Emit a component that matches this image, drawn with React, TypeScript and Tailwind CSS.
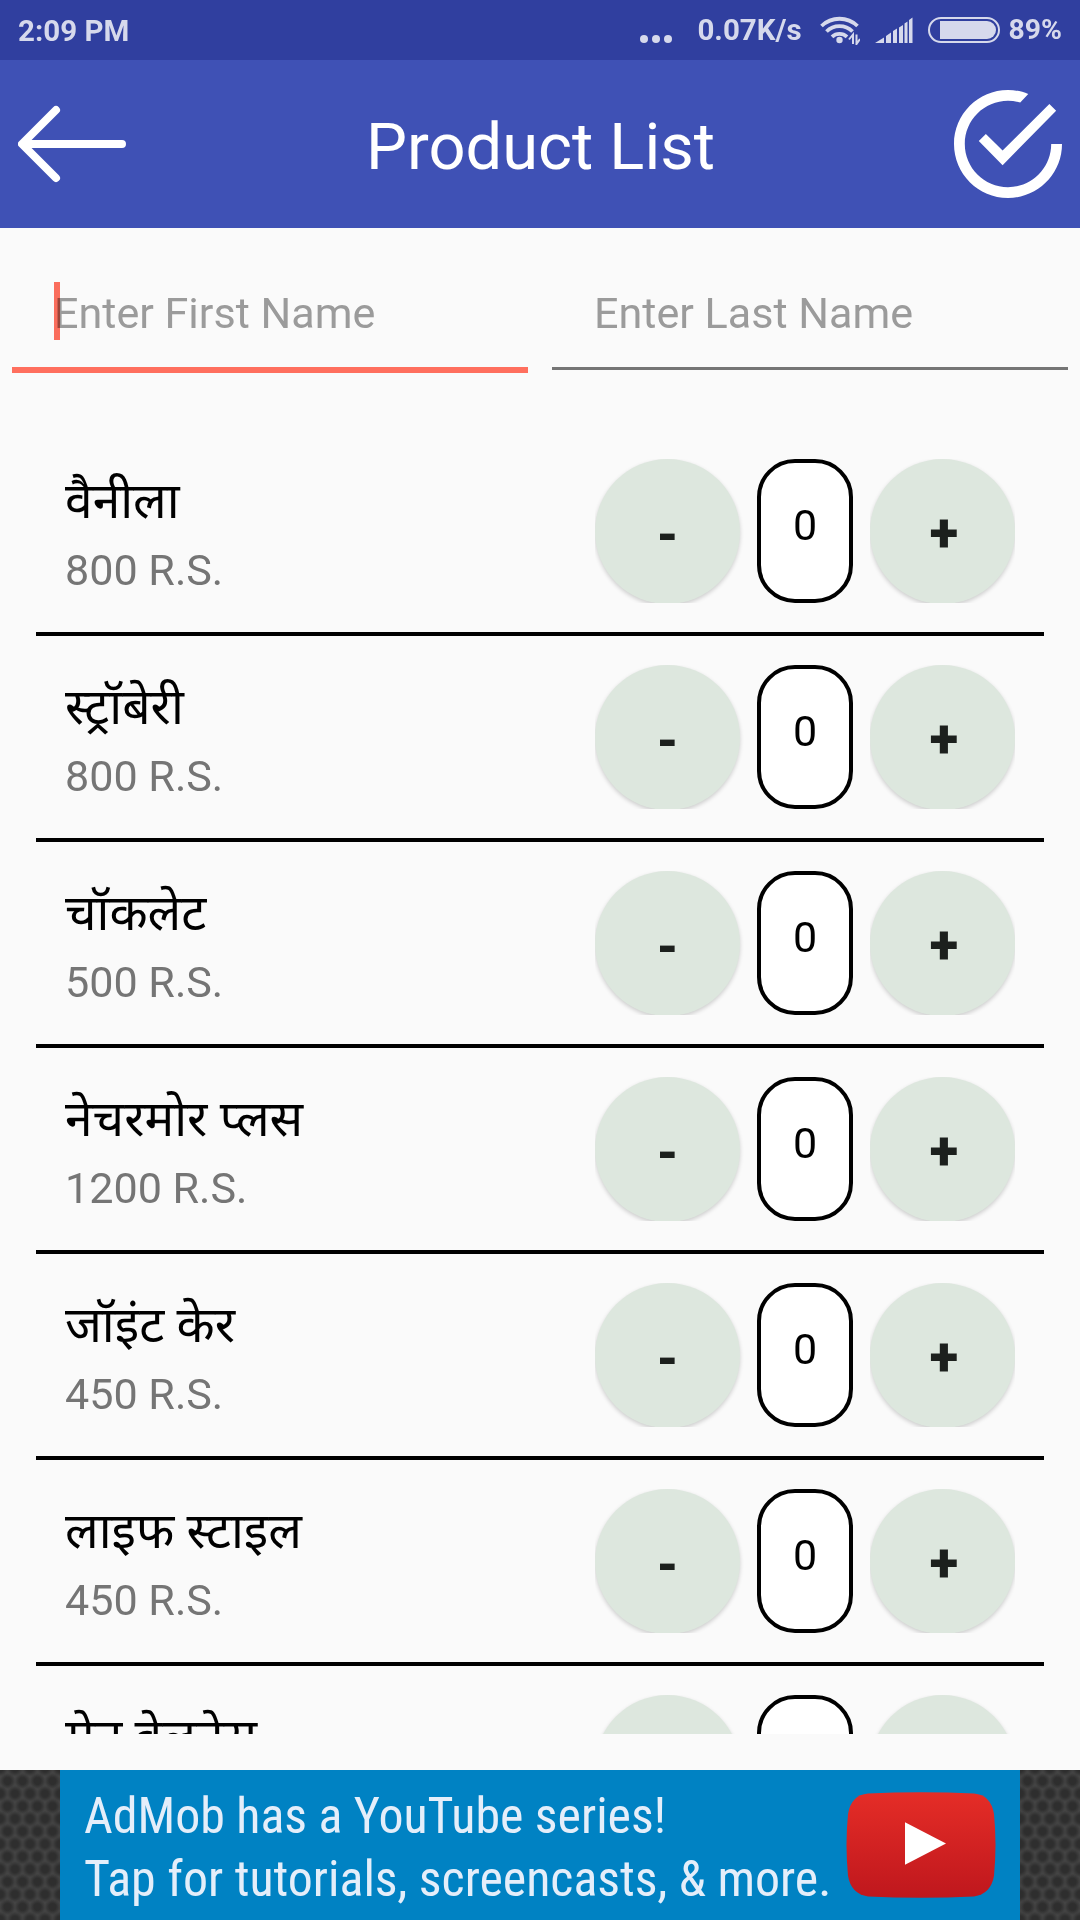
import React from 'react';

interface Product {
  name: string;
  price: string;
}

const products: Product[] = [
  { name: 'वैनीला', price: '800 R.S.' },
  { name: 'स्ट्रॉबेरी', price: '800 R.S.' },
  { name: 'चॉकलेट', price: '500 R.S.' },
  { name: 'नेचरमोर प्लस', price: '1200 R.S.' },
  { name: 'जॉइंट केर', price: '450 R.S.' },
  { name: 'लाइफ स्टाइल', price: '450 R.S.' },
  { name: 'मेन वेलनेस', price: '450 R.S.' },
];

const StatusBar: React.FC = () => (
  <div className="flex h-[60px] items-center bg-[#303f9f] pl-[18px] pr-[18px] text-[29.500px] font-bold text-[#d6d9ec]">
    <span className="pt-[2px]">2:09 PM</span>
    <svg className="ml-auto mt-[18px]" width="32" height="10" viewBox="0 0 32 10" fill="currentColor">
      <circle cx="4" cy="5" r="4" />
      <circle cx="16" cy="5" r="4" />
      <circle cx="28" cy="5" r="4" />
    </svg>
    <span className="ml-[25px] pt-[1px]">0.07K/s</span>
    <svg className="ml-[18px]" width="40" height="30" viewBox="0 0 40 30" fill="none" stroke="currentColor" strokeWidth="3.8">
      <path d="M1.5 11a26 26 0 0 1 36 0" />
      <path d="M6.5 16.500a18.500 18.500 0 0 1 26 0" />
      <path d="M12 21.800a11 11 0 0 1 15 0" />
      <circle cx="19.500" cy="25" r="3.200" fill="currentColor" stroke="none" />
      <path d="M33 29v-9.500l-4 5M36.500 19.500v9.500l3.500-5" strokeWidth="2" />
    </svg>
    <svg className="ml-[15px]" width="38" height="26" viewBox="0 0 38 26" fill="currentColor">
      <path d="M0 26 9 20.500V26ZM11 19 16 15.500V26h-5ZM18 14l4-2.500V26H18ZM24 10.500l4-2.500v18h-4ZM29.500 6.500l3-2V26h-3ZM34 3l3.500-2.500V26H34Z" />
    </svg>
    <div className="ml-[15px] h-[26px] w-[72px] rounded-full border-2 border-current py-[2px] pl-[10px] pr-[2px]">
      <div className="h-full rounded-l-[3px] rounded-r-full bg-current" />
    </div>
    <span className="ml-[9px] pt-[1px] text-[28.300px]">89%</span>
  </div>
);

const Header: React.FC = () => (
  <header className="flex h-[168px] items-center justify-between bg-[#3f51b5] px-[18px] text-white">
    <svg width="108" height="108" viewBox="0 0 108 108" fill="none" stroke="currentColor" strokeWidth="8" strokeLinecap="round" strokeLinejoin="round">
      <path d="M38 20 4 54l34 34M6 54h98" />
    </svg>
    <h1 className="pl-[1px] pt-[6px] text-[65px] leading-none">Product List</h1>
    <svg width="108" height="108" viewBox="0 0 24 24" fill="currentColor">
      <path d="M22.700 4.590 21.190 3.100 10.800 13.460 7.080 9.760 5.510 11.310 10.800 16.700ZM21.600 12c0 5.300-4.300 9.600-9.600 9.600S2.400 17.300 2.400 12 6.700 2.400 12 2.400c.940 0 1.850.120 2.720.370L16.500.880C15.110.320 13.570 0 12 0 5.380 0 0 5.380 0 12s5.380 12 12 12 12-5.380 12-12Z" />
    </svg>
  </header>
);

const stepButton =
  'size-[145px] rounded-full bg-[#dde7de] font-black text-[#1c201d] shadow-[0_2px_4px_rgba(0,0,0,0.18)]';

const Stepper: React.FC = () => (
  <div className="flex h-[144px] gap-[17px]">
    <div className="h-[144px] w-[150px] -mr-[5px] overflow-hidden">
      <button className={`${stepButton} pt-[7px] text-[50px]`}>-</button>
    </div>
    <div className="flex h-[144px] w-24 justify-center rounded-[38px] border-4 border-black bg-white pt-[37px] text-[43px] leading-[50px] text-black">0</div>
    <div className="h-[144px] w-[145px] overflow-hidden">
      <button className={`${stepButton} pl-[3px] pt-[5px] text-[53px]`}>+</button>
    </div>
  </div>
);

const ProductRow: React.FC<{ product: Product }> = ({ product }) => (
  <li className="flex h-[206px] justify-between border-b-4 border-black pl-[29px] pr-[29px] pt-[29px]">
    <div>
      <p className="h-[82px] pt-[10px] text-[49.700px] leading-[65px] text-black">{product.name}</p>
      <p className="pt-[1px] text-[43.100px] leading-[58px] text-[#757575]">{product.price}</p>
    </div>
    <Stepper />
  </li>
);

const AdBanner: React.FC = () => (
  <div className="flex h-[150px] bg-[#444444] bg-[radial-gradient(circle,#2e2e2e_3.500px,transparent_8px),radial-gradient(circle,#2e2e2e_3.500px,transparent_8px)] bg-[length:15px_25.200px] bg-[position:0_-1.600px,7.500px_11px] px-[60px]">
    <div className="flex w-[960px] items-center bg-[#0082c3] pl-6 pr-6 text-[#e4eefa]">
      <div className="w-[762px] whitespace-nowrap pt-[5px] text-[49.900px] leading-[63px] [font-stretch:75%]">
        <p>AdMob has a YouTube series!</p>
        <p>Tap for tutorials, screencasts, &amp; more.</p>
      </div>
      <svg width="150" height="106" viewBox="0 0 150 105" preserveAspectRatio="none">
        <defs>
          <linearGradient id="play" x1="0" y1="0" x2="0" y2="1">
            <stop offset="0" stopColor="#e52d27" />
            <stop offset="1" stopColor="#bf171d" />
          </linearGradient>
        </defs>
        <path d="M22 1.500Q75-1 128 1.500 145 3 148 22 151 52 148 83 145 101 128 103.500 75 106 22 103.500 5 101 2 83-1 52 2 22 5 3 22 1.500Z" fill="url(#play)" />
        <path d="M59 30v42l41-21Z" fill="#fff" />
      </svg>
    </div>
  </div>
);

const App: React.FC = () => {
  return (
    <div className="flex h-[1920px] w-[1080px] flex-col overflow-hidden bg-[#fafafa] font-[Roboto,'Noto_Sans',sans-serif]">
      <StatusBar />
      <Header />
      <div className="flex gap-6 px-3 text-[43.100px] leading-[58px] text-[#9b9b9b]">
        <div className="relative h-[145px] w-[516px] border-b-[6px] border-[#ff6f5e] pl-[42px] pt-[57px]">
          Enter First Name
          {/* text cursor */}
          <span className="absolute left-[42px] top-[54px] h-[58px] w-[6px] bg-[#ff6f5e] mix-blend-multiply" />
        </div>
        <div className="h-[142px] w-[516px] border-b-[3px] border-[#757575] pl-[42px] pt-[57px]">
          Enter Last Name
        </div>
      </div>
      <ul className="mx-9 mt-[57px] h-[1304px] overflow-hidden">
        {products.map((product) => (
          <ProductRow key={product.name} product={product} />
        ))}
      </ul>
      <div className="mt-auto">
        <AdBanner />
      </div>
    </div>
  );
};

export default App;
